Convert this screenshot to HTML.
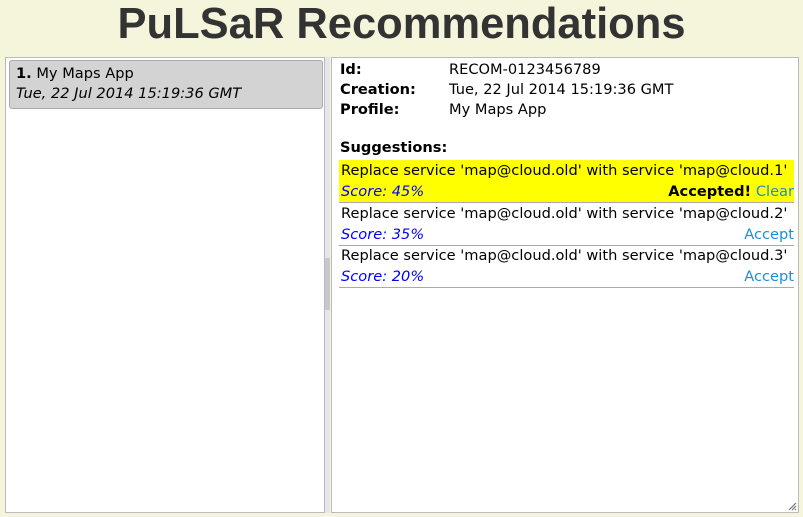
<!DOCTYPE html>
<html><head><style>
body{margin:0;width:803px;height:517px;background:#f5f5dc;font-family:"DejaVu Sans",Verdana,sans-serif;font-size:14.6px;overflow:hidden;position:relative;color:#000}
h1{margin:0;position:absolute;top:0;left:0;width:803px;text-align:center;font-family:"Liberation Sans",Arial,sans-serif;font-weight:bold;font-size:43.5px;line-height:48px;color:#333}
#left{position:absolute;left:5px;top:57px;width:318px;height:454px;background:#fff;border:1px solid #bbb}
#split{position:absolute;left:325px;top:57px;width:5px;height:456px;background:#e6e6e6}
#thumb{position:absolute;left:325px;top:258px;width:5px;height:52px;background:#c8c8c8}
#right{position:absolute;left:331px;top:57px;width:466px;height:454px;background:#fff;border:1px solid #bbb}
.item{position:absolute;left:3px;top:2px;width:306px;height:44px;background:#d3d3d3;border:1px solid #aaa;border-radius:3px;padding:3px 0 0 6px;line-height:20px}
table{position:absolute;left:8px;top:2px;border-collapse:collapse}
td{padding:0;line-height:20px}
td.k{font-weight:bold;width:109px}
.sh{position:absolute;left:8px;top:80px;font-weight:bold;line-height:20px}
.s{position:absolute;left:7px;width:453px;line-height:21px;border-bottom:1px solid #aaa;padding-left:2px;white-space:nowrap}
.s i{color:#00f}
.r{float:right;color:#1a8fd6}
</style></head><body>
<h1>PuLSaR Recommendations</h1>
<div id="left"><div class="item"><b>1.</b> My Maps App<br><i>Tue, 22 Jul 2014 15:19:36 GMT</i></div></div>
<div id="split"></div><div id="thumb"></div>
<div id="right">
<table><tr><td class="k">Id:</td><td>RECOM-0123456789</td></tr>
<tr><td class="k">Creation:</td><td>Tue, 22 Jul 2014 15:19:36 GMT</td></tr>
<tr><td class="k">Profile:</td><td>My Maps App</td></tr></table>
<div class="sh">Suggestions:</div>
<div class="s" style="top:102px;background:#ff0">Replace service 'map@cloud.old' with service 'map@cloud.1'<br><i>Score: 45%</i><span class="r"><b style="color:#000">Accepted!</b> Clear</span></div>
<div class="s" style="top:145px">Replace service 'map@cloud.old' with service 'map@cloud.2'<br><i>Score: 35%</i><span class="r">Accept</span></div>
<div class="s" style="top:187px">Replace service 'map@cloud.old' with service 'map@cloud.3'<br><i>Score: 20%</i><span class="r">Accept</span></div>
<svg style="position:absolute;right:1px;bottom:1px" width="10" height="10"><path d="M9 2L2 9M9 5L5 9M9 8L8 9" stroke="#777" stroke-width="1.2"/></svg>
</div>
</body></html>
